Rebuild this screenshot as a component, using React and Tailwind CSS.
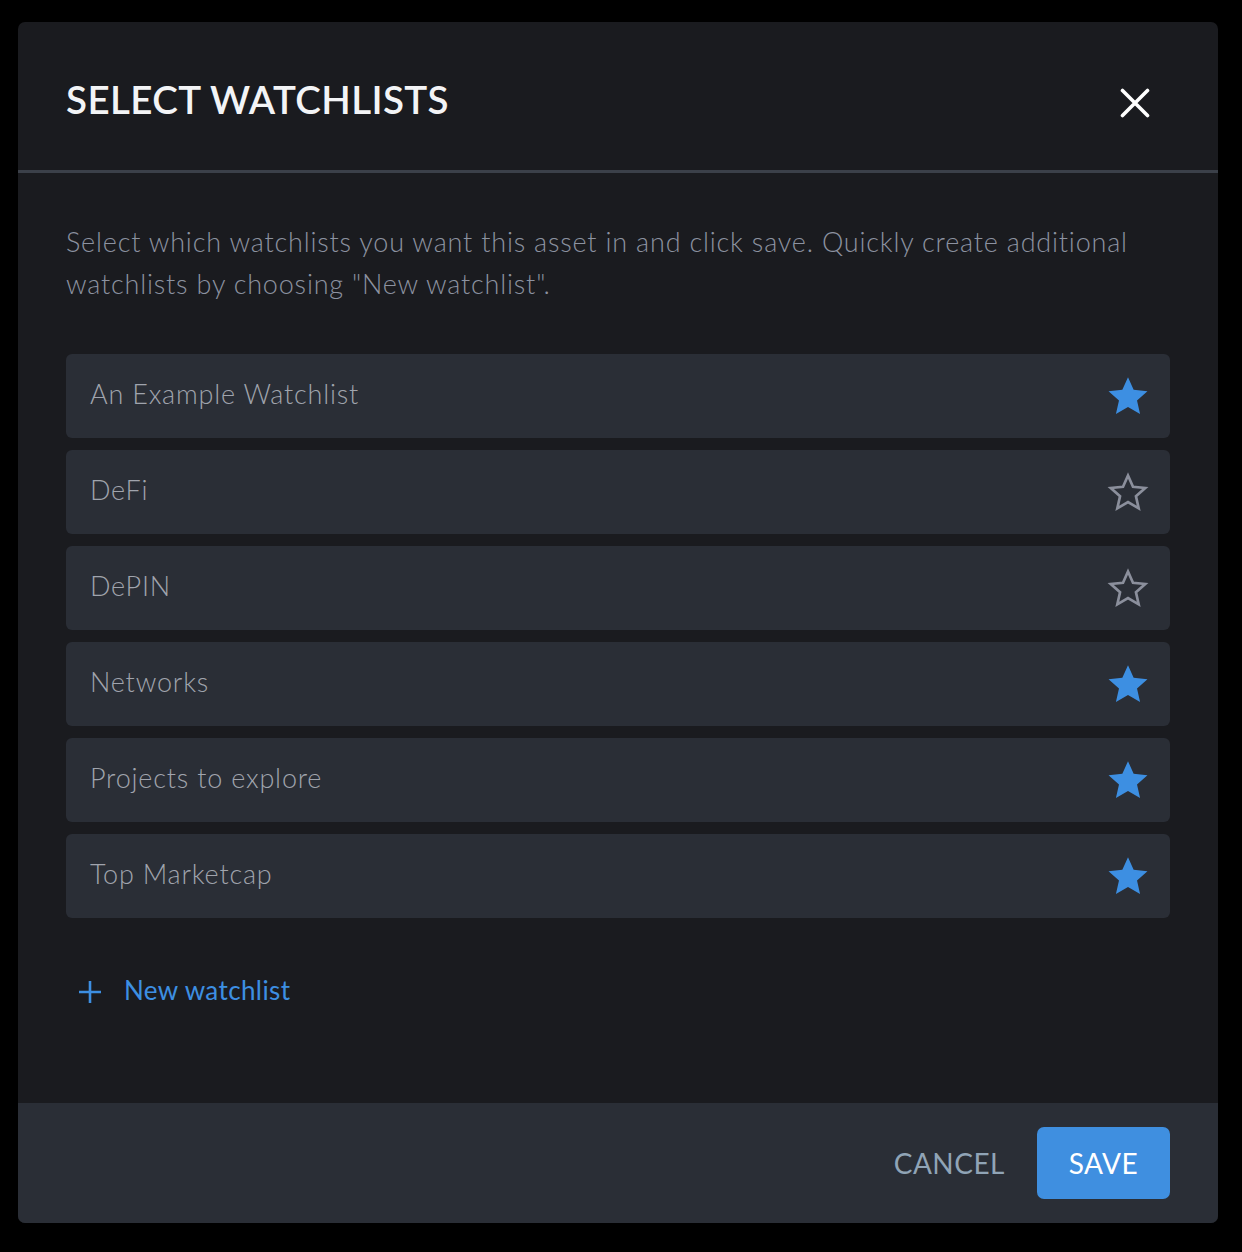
import React from "react";

const items = [
  { name: "An Example Watchlist", on: true },
  { name: "DeFi", on: false },
  { name: "DePIN", on: false },
  { name: "Networks", on: true },
  { name: "Projects to explore", on: true },
  { name: "Top Marketcap", on: true },
];

function Star({ on }) {
  if (on) {
    return (
      <svg width="46" height="46" viewBox="0 0 24 24">
        <path
          d="M12 2.2l2.95 6.6 7.2.7-5.45 4.8 1.6 7.05L12 17.7l-6.3 3.65 1.6-7.05L1.85 9.5l7.2-.7z"
          fill="#3d8fe2"
        />
      </svg>
    );
  }
  return (
    <svg width="46" height="46" viewBox="0 0 24 24">
      <path
        d="M12 3.4l2.6 5.9 6.4.62-4.85 4.3 1.42 6.28L12 17.25l-5.57 3.25 1.42-6.28L3 9.92l6.4-.62z"
        fill="none"
        stroke="#8b8f9c"
        strokeWidth="1.4"
        strokeLinejoin="miter"
      />
    </svg>
  );
}

export default function App() {
  return (
    <div
      className="min-h-[1252px] w-[1242px] bg-black pt-[22px] pl-[18px]"
      style={{ fontFamily: "Lato, 'Open Sans', sans-serif" }}
    >
      <div className="w-[1200px] h-[1201px] bg-[#1a1b1f] rounded-[7px] overflow-hidden flex flex-col">
        <div className="h-[151px] flex items-center justify-between pl-[48px] pr-[68px] border-b-[3px] border-[#3b4049] shrink-0">
          <h1 className="text-[38.5px] font-semibold text-[#f3f4f6] tracking-[0.4px] mt-[7px]">
            SELECT WATCHLISTS
          </h1>
          <svg width="30" height="30" viewBox="0 0 30 30" className="mt-[14px]">
            <path d="M2.5 2.5L27.5 27.5M27.5 2.5L2.5 27.5" stroke="#ffffff" strokeWidth="3.6" strokeLinecap="round" />
          </svg>
        </div>
        <div className="flex-1 px-[48px] pt-[48px]">
          <p className="text-[27px] leading-[42px] text-[#8c92a0] font-light tracking-[0.8px]">
            Select which watchlists you want this asset in and click save. Quickly create additional watchlists by choosing "New watchlist".
          </p>
          <div className="mt-[49px] flex flex-col gap-[12px]">
            {items.map((it) => (
              <div
                key={it.name}
                className="h-[84px] bg-[#2a2e36] rounded-[6px] flex items-center justify-between pl-[24px] pr-[19px]"
              >
                <span className="text-[27px] text-[#a0a4ad] font-light tracking-[0.8px] -mt-[4px]">{it.name}</span>
                <Star on={it.on} />
              </div>
            ))}
          </div>
          <div className="mt-[55px] flex items-center pl-[12px] gap-[22px] text-[#3d8fe2]">
            <svg width="24" height="24" viewBox="0 0 24 24">
              <path d="M12 1v22M1 12h22" stroke="#3d8fe2" strokeWidth="2.6" />
            </svg>
            <span className="text-[26px] tracking-[0.4px] -mt-[2px]">New watchlist</span>
          </div>
        </div>
        <div className="h-[120px] bg-[#2a2e36] flex items-center justify-end pr-[48px] gap-[32px] shrink-0">
          <button className="text-[28px] text-[#90a4b6] tracking-[0.5px]">CANCEL</button>
          <button className="w-[133px] h-[72px] bg-[#3f8fe0] rounded-[7px] text-[28px] text-white tracking-[0.5px]">
            SAVE
          </button>
        </div>
      </div>
    </div>
  );
}
